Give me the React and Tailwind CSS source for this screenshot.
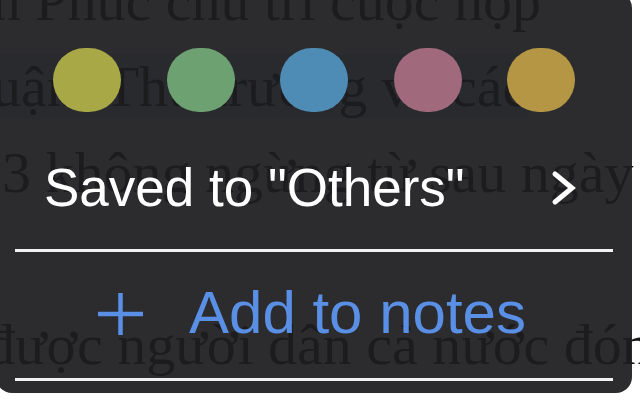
import React from "react";

const colors = ["bg-[#a9a846]", "bg-[#6ea172]", "bg-[#4f8cb5]", "bg-[#a0697c]", "bg-[#b49645]"];

export default function App() {
  return (
    <div className="relative w-[640px] h-[400px] overflow-hidden bg-white">
      {/* page text under the popup */}
      <div
        className="mt-[-42px] whitespace-nowrap text-[58px] leading-[86px] text-[#1c1c1c]"
        style={{ fontFamily: '"Liberation Serif", serif' }}
      >
        <p className="ml-[-34px]">ân Phúc chủ trì cuộc họp</p>
        <p className="ml-[-8px]">
          <span className="bg-[#c9dbf3]">uận. Thủ trưởng và các</span>
        </p>
        <p className="ml-[2px]">3 không ngừng từ sau ngày</p>
        <p>&nbsp;</p>
        <p className="ml-[-14px]">được người dân cả nước đón</p>
      </div>

      {/* popup */}
      <div
        className="absolute left-[-4px] top-[-8px] w-[636px] h-[401px] rounded-[16px] bg-[rgba(28,28,30,0.93)] flex flex-col pt-[56px]"
        style={{ fontFamily: '"Liberation Sans", Arial, sans-serif' }}
      >
        <div className="flex gap-[45.5px] pl-[57px]">
          {colors.map((c) => (
            <div key={c} className={`w-[68px] h-[64px] rounded-full ${c}`} />
          ))}
        </div>

        <div className="mt-[46px] h-[60px] flex items-center pl-[48px] pr-[55px] justify-between">
          <span className="text-[53px] leading-[60px] text-white">Saved to "Others"</span>
          <svg width="26" height="36" viewBox="0 0 26 36" fill="none">
            <polyline
              points="4,4 21,18 4,32"
              stroke="#ffffff"
              strokeWidth="5"
              strokeLinecap="round"
              strokeLinejoin="miter"
            />
          </svg>
        </div>

        <div className="mt-[31px] mx-[19px] h-[3px] bg-[#f2f2f2]" />

        <div className="mt-[26px] h-[70px] flex items-center pl-[102px]">
          <svg width="45" height="42" viewBox="0 0 45 42" fill="none" className="mt-[2px]">
            <line x1="0" y1="21" x2="45" y2="21" stroke="#5a8fe6" strokeWidth="4.5" />
            <line x1="22.5" y1="0" x2="22.5" y2="42" stroke="#5a8fe6" strokeWidth="4.5" />
          </svg>
          <span className="ml-[46px] text-[60px] leading-[70px] text-[#5a8fe6]">Add to notes</span>
        </div>

        <div className="mt-[30px] mx-[19px] h-[3px] bg-[#f2f2f2]" />
      </div>
    </div>
  );
}
